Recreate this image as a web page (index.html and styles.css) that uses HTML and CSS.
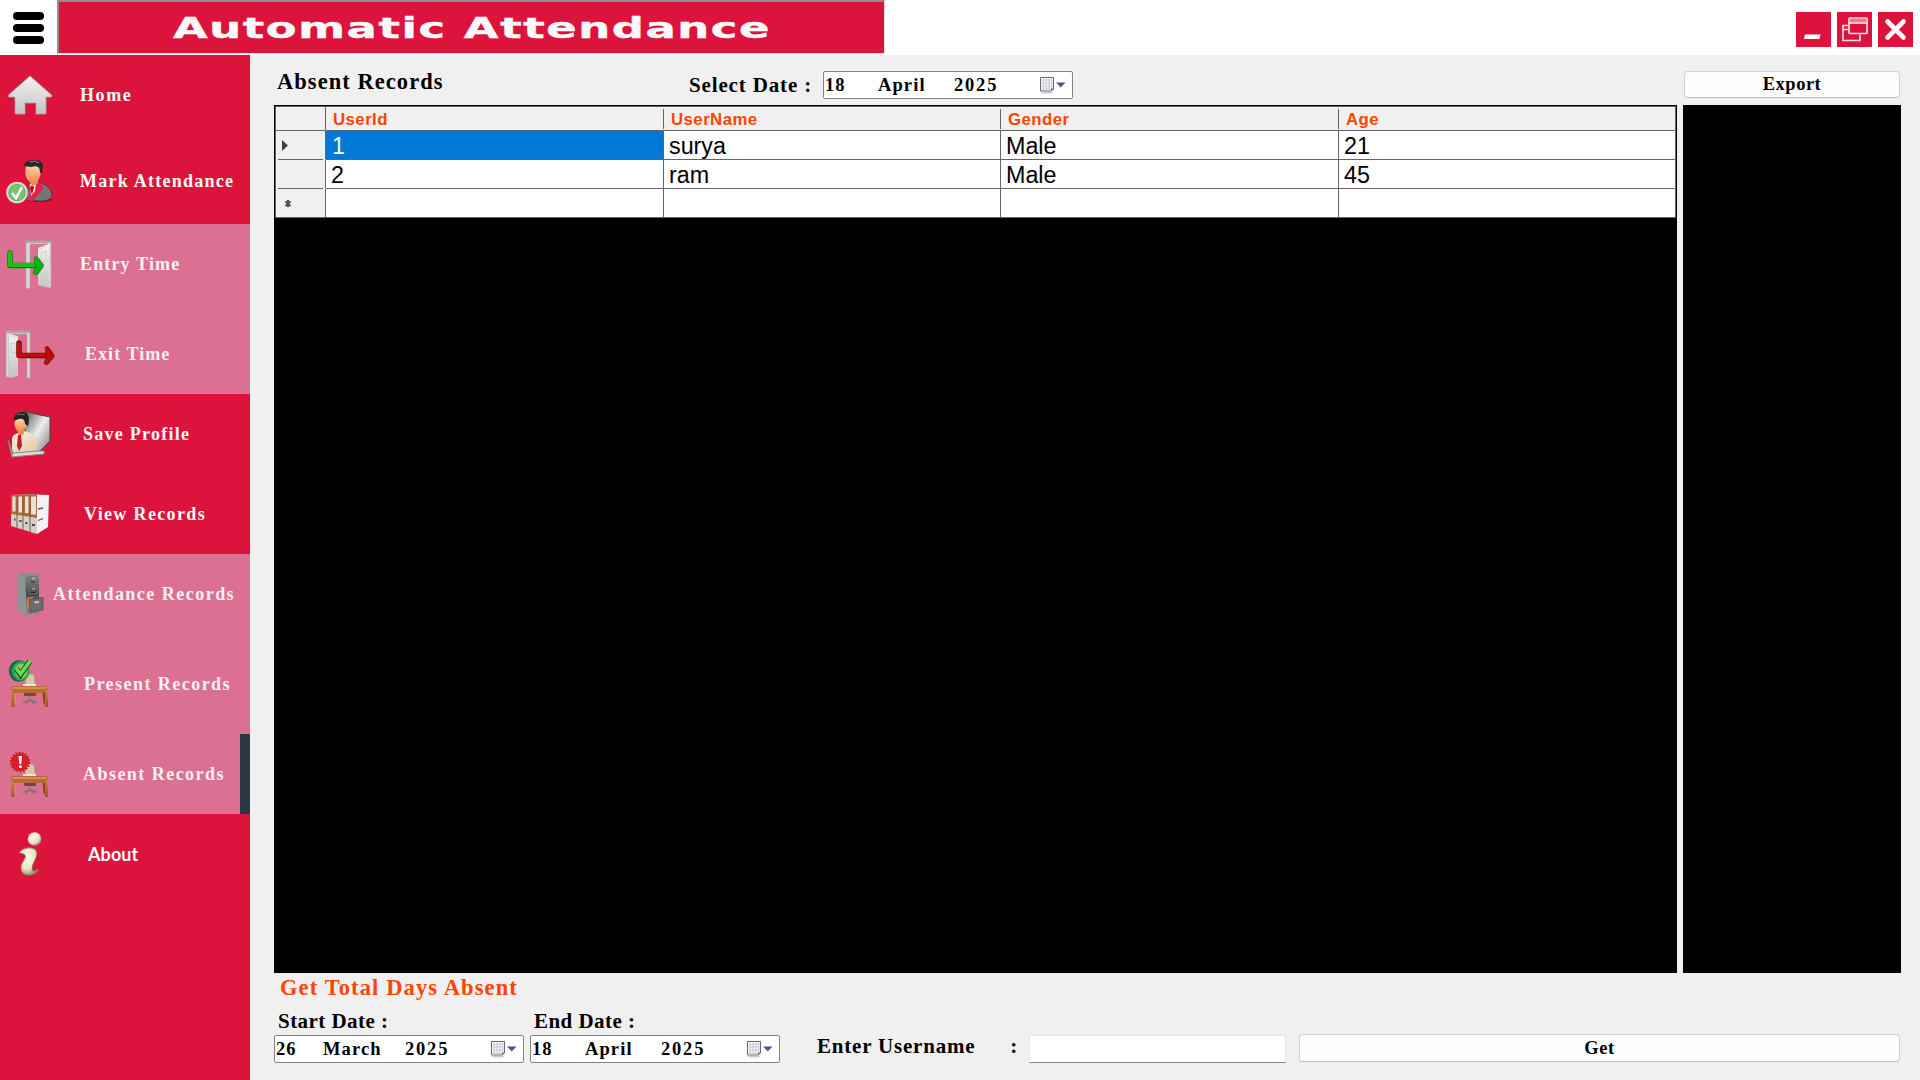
FILE: index.html
```html
<!DOCTYPE html>
<html lang="en">
<head>
<meta charset="utf-8">
<title>Automatic Attendance</title>
<link rel="stylesheet" href="styles.css">
</head>
<body>
<svg class="defs" width="0" height="0" aria-hidden="true">
  <defs>
    <linearGradient id="silver" x1="0" y1="0" x2="0" y2="1"><stop offset="0" stop-color="#f4f4f4"/><stop offset="1" stop-color="#c4c4c4"/></linearGradient>
    <linearGradient id="steel" x1="0" y1="0" x2="1" y2="1"><stop offset="0" stop-color="#555"/><stop offset=".5" stop-color="#eee"/><stop offset="1" stop-color="#777"/></linearGradient>
    <linearGradient id="skin" x1="0" y1="0" x2="0" y2="1"><stop offset="0" stop-color="#ffe6cc"/><stop offset="1" stop-color="#ee8a3e"/></linearGradient>
    <linearGradient id="shirt" x1="0" y1="0" x2="1" y2="1"><stop offset="0" stop-color="#fbf1e0"/><stop offset="1" stop-color="#e3c8a2"/></linearGradient>
    <linearGradient id="wood" x1="0" y1="0" x2="0" y2="1"><stop offset="0" stop-color="#d58a4e"/><stop offset="1" stop-color="#a55222"/></linearGradient>
    <linearGradient id="cabinet" x1="0" y1="0" x2="0" y2="1"><stop offset="0" stop-color="#8d8f90"/><stop offset=".5" stop-color="#47494a"/><stop offset="1" stop-color="#85888a"/></linearGradient>
    <radialGradient id="pearl" cx=".4" cy=".35" r=".7"><stop offset="0" stop-color="#fffbe6"/><stop offset=".6" stop-color="#ebe4c6"/><stop offset="1" stop-color="#8d8768"/></radialGradient>
    <g id="calendar">
      <path d="M2 16h12l-1 1.500H3z" fill="#aaa" opacity=".6"/>
      <path d="M1.500 1.500h13v11.500l-2 2h-11z" fill="#f6f7fa" stroke="#6f6767"/>
      <path d="M3 4h10M3 7h10M3 10h10M3 13h8M4 3v11M7 3v11M10 3v11M12.800 3v9" stroke="#c3c8d2" stroke-width=".9" fill="none"/>
      <path d="M14.500 12.500l-2.500 2.500v-2.500z" fill="#555"/>
      <path d="M17 6.500h9.500l-4.700 5z" fill="#44598c"/>
    </g>
    <g id="desk">
      <path d="M26 31q4-2 8 0l1.500 11H25z" fill="#d9c9ab" stroke="#a8946f" stroke-width=".6"/>
      <path d="M23 42h13v-2H23z" fill="#efe4ce"/>
      <path d="M24 49h12v3H24z" fill="#6f4a44"/>
      <path d="M30 52v4M22.500 58.500l7.500-3 7.500 3M25.500 60l4.500-4.500 4.500 4.500" fill="none" stroke="#777" stroke-width="1.300"/>
      <path d="M11.500 44h2.500l.5 19h-3zM45.500 44h2.500v19h-3z" fill="url(#wood)"/>
      <path d="M14 47h2.500l-1 13-1.500-1z" fill="#c98d69" opacity=".8"/><path d="M45.500 47l-3 1 1 11 1.500 2z" fill="#8f4319"/>
      <path d="M13 46h33v3H13z" fill="#b96a33"/>
      <path d="M12 42.500h35l1 3H11z" fill="#d98c4c" stroke="#a45a25" stroke-width=".6"/>
    </g>
  </defs>
</svg>

<header class="topbar">
  <button class="menu" aria-label="Menu"><span></span><span></span><span></span></button>
  <h1 class="brand">
    <svg width="826" height="51" viewBox="0 0 826 51"><text class="brand-text" x="114" y="36" textLength="598" lengthAdjust="spacingAndGlyphs">Automatic Attendance</text></svg>
  </h1>
  <div class="window-buttons">
    <svg width="35" height="35"><path d="M9 22.500h15.500l-1 4.500H8z" fill="#fff"/></svg>
    <svg width="35" height="35" fill="none" stroke="#ffe3e8" stroke-width="1.700"><path d="M11 13.500H6v15h17v-6M6 17.500h5"/><rect x="12" y="6" width="18" height="15.500" rx="1"/><path d="M12.500 8.500h17" stroke="#ee7790" stroke-width="3"/><path d="M12 11h18"/></svg>
    <svg width="35" height="35"><path d="M9.500 9.500l16 16M25.500 9.500l-16 16" stroke="#fff" stroke-width="4.600" stroke-linecap="round"/></svg>
  </div>
</header>

<div class="shell">
  <nav class="sidebar">
    <div class="group group-first">
      <a class="item home">
        <svg class="icon" viewBox="0 0 60 80"><path d="M30 21L51.500 40q1 2-1 2H46v16q0 1-1 1H36V48H25v11h-9q-1 0-1-1V42h-5q-3 0-1.500-2z" fill="url(#silver)" stroke="#aaa" stroke-width=".8"/><path d="M25 48h11v1H26v10h-1z" fill="#8d6870"/></svg>
        <span>Home</span></a>
      <a class="item mark">
        <svg class="icon" viewBox="0 0 60 80"><ellipse cx="40" cy="59" rx="12" ry="2" fill="#8d1028"/><path d="M27 59c0-12 3-16 9-18 8 1 14 5 16 12 0 6-6 7-13 7z" fill="#737679" stroke="#333" stroke-width=".6"/><path d="M29 43l9-3 6 7-11 13h-4z" fill="#e3214a"/><path d="M30 43l6-1-1 8-4 5z" fill="#f5e9ea"/><path d="M32 44l2 2-2 8-2-7z" fill="#b30d22"/><path d="M30 37h8v5l-5 3-3-3z" fill="#e98f4a"/><ellipse cx="33" cy="31" rx="7.700" ry="11" fill="url(#skin)"/><path d="M24 24.500c0-5 7-6 13-5 6 0 7 5 5 13l-2-1c0-5-2-7-6-6-4 1-7 0-10-1z" fill="#292929"/><path d="M30 21q5-2 9 1" stroke="#888" fill="none"/><circle cx="17" cy="51.500" r="9.700" fill="#459b43" stroke="#d9d9d9" stroke-width="2.200"/><circle cx="17" cy="51.500" r="8" fill="#76c46b"/><path d="M12 52l4 5 6-11" fill="none" stroke="#fff" stroke-width="2.500"/></svg>
        <span>Mark Attendance</span></a>
    </div>
    <div class="group group-sub">
      <a class="item entry">
        <svg class="icon" viewBox="0 0 60 80"><path d="M26 17h25v47l-3-1V20H30v44l-4 .5z" fill="#d8d8d8" stroke="#aaa" stroke-width=".7"/><path d="M26 17h25v2H26z" fill="#a9a9a9"/><path d="M38 24l11-4v44l-11-3z" fill="url(#silver)"/><path d="M38 24l8-3v2l-6 4z" fill="#f3dccb"/><path d="M41 29l5-2v10l-5 2zM41 50l5 1v8l-5-2z" fill="none" stroke="#c8c8c8" stroke-width=".8"/><path d="M10 29v12.500h26" fill="none" stroke="#087e08" stroke-width="5.500" stroke-linejoin="round" stroke-linecap="round"/><path d="M10 29v12h26" fill="none" stroke="#12c512" stroke-width="4" stroke-linejoin="round" stroke-linecap="round"/><path d="M34 33.500q2-2 4 0l5 6.500q1 1.500 0 3l-5 7q-3 2-5-1l2-5v-5z" fill="#0cb20e" stroke="#087e08" stroke-width=".7"/></svg>
        <span>Entry Time</span></a>
      <a class="item exit">
        <svg class="icon" viewBox="0 0 60 80"><path d="M6 17h24v47h-3V20H9v43H6z" fill="#d8d8d8" stroke="#aaa" stroke-width=".7"/><path d="M6 17h24v2H6z" fill="#a9a9a9"/><path d="M9 20l9 3v39L9 64z" fill="url(#silver)"/><path d="M10 20l8 2v3l-7-2z" fill="#f3dccb"/><path d="M11 29l5 1v9l-5-1zM11 49h5v9l-5 2z" fill="none" stroke="#c8c8c8" stroke-width=".8"/><path d="M19 29v12.500h29" fill="none" stroke="#7a0808" stroke-width="5.500" stroke-linejoin="round" stroke-linecap="round"/><path d="M19 29v12h28" fill="none" stroke="#c40d0d" stroke-width="3.700" stroke-linejoin="round" stroke-linecap="round"/><path d="M45 33.500q2-2 4 0l5 7.500v2l-6 7q-3 2-4-1l2-5v-5z" fill="#be0b0b" stroke="#7a0808" stroke-width=".7"/></svg>
        <span>Exit Time</span></a>
    </div>
    <div class="group">
      <a class="item save">
        <svg class="icon" viewBox="0 0 60 80"><path d="M25 17q13 4 25 6v24l-12 12-13-3z" fill="url(#steel)" stroke="#444" stroke-width="1"/><path d="M12 59V45q0-4 6-6l6-2q11 2 13 9v13z" fill="url(#shirt)"/><path d="M17 35h8l-2 6-4 1z" fill="#e98f4a"/><path d="M18 41h3l1 11-3 5-2-5z" fill="#bd1d2c"/><ellipse cx="20.500" cy="29.500" rx="6" ry="8.500" fill="url(#skin)"/><path d="M14 27c-1-7 5-9 9-9 6 0 7 7 5 14l-3-2c0-4-2-6-6-5-2 1-4 1-5 2z" fill="#222"/><path d="M17 21q4-2 8 0" stroke="#777" fill="none"/><path d="M8 46l5 13 26-2h5v3l-32 3z" fill="#ddd" stroke="#888" stroke-width="1"/><path d="M8 46l5 13v4z" fill="#777"/></svg>
        <span>Save Profile</span></a>
      <a class="item view">
        <svg class="icon" viewBox="0 0 60 80"><path d="M37 20.500l12 .5-1 32-11 7z" fill="#f1f2f5"/><path d="M11 21l26-1v40l-26-8z" fill="#d3d0ca"/><path d="M11 21l26-1v24l-26-4z" fill="#b3693a"/><path d="M12.500 22.500h3v15h-3zM18.500 22.500h3.500v16h-3.500zM25 22.500h3.500v16.500h-3.500zM31 22.500h5v18h-5z" fill="#e6e2dc"/><path d="M17 21v33M23 21v35M30 21v37" stroke="#77604c"/><path d="M14 45.500h1.500M19.500 47h2M25.500 49h2M32 51h3" stroke="#444" stroke-width="2.200"/><path d="M38 35l5-1M38 46.500l5-2" stroke="#555" stroke-width="1.300"/></svg>
        <span>View Records</span></a>
    </div>
    <div class="group group-sub">
      <a class="item attendance">
        <svg class="icon" viewBox="0 0 60 80"><path d="M17 20l8-1 14 1v39l-12 2z" fill="url(#cabinet)"/><path d="M17 20l8 2 2 39-10-4z" fill="#8e9395"/><path d="M29 22.500h8.500v7H29zM29 32.500h8.500v7H29z" fill="none" stroke="#6f7273" stroke-width=".7"/><path d="M32 23.500h3.500v2H32zM32 34h3.500v1.500H32z" fill="#a2a5a5"/><path d="M31 28h4M31 38.500h4" stroke="#222"/><path d="M27 44l6-1.500v12l-6 1z" fill="#c87842"/><path d="M29.500 45.500l13.500-2V56l-13 2z" fill="#686d70" stroke="#44494b" stroke-width=".7"/><path d="M34.500 47.500l4.500-.5v2l-4.500.5z" fill="#ccc"/></svg>
        <span>Attendance Records</span></a>
      <a class="item present">
        <svg class="icon" viewBox="0 0 60 80"><use href="#desk"/><ellipse cx="19" cy="27" rx="9" ry="9.500" fill="#16814d" stroke="#0f6a44" stroke-width="2.500"/><ellipse cx="21" cy="27" rx="7.500" ry="8.500" fill="#88ca72" stroke="#30ab50" stroke-width="2.500"/><path d="M16 24.500l4.500 6L30 17" fill="none" stroke="#07551e" stroke-width="5.500"/><path d="M16 24l4.500 6L30.500 16.500" fill="none" stroke="#6fdd50" stroke-width="3.600"/></svg>
        <span>Present Records</span></a>
      <a class="item absent selected">
        <svg class="icon" viewBox="0 0 60 80"><use href="#desk"/><circle cx="20" cy="28" r="8.800" fill="#d81e26"/><circle cx="20" cy="28" r="9.200" fill="none" stroke="#c81720" stroke-width="2" stroke-dasharray="1.800 1.400"/><path d="M18.500 22h3.500l-.7 8h-2zM19 31.500h2.600v2.500H19z" fill="#fff"/></svg>
        <span>Absent Records</span></a>
    </div>
    <div class="group">
      <a class="item about">
        <svg class="icon" viewBox="0 0 60 80"><circle cx="34.500" cy="25" r="6.800" fill="url(#pearl)"/><path d="M19 39c4-7 19-7 18 1-1 6-6 11-4.500 16 1 2 3 1 4.500-1q2 0 1 2c-4 6-17 6-17-2-1-6 6-11 4-14q-2-2-6-2z" fill="url(#pearl)" stroke="#777253" stroke-width=".8"/></svg>
        <span>About</span></a>
    </div>
  </nav>

  <main class="content">
    <div class="toolbar">
      <h2 class="page-title">Absent Records</h2>
      <label class="select-label">Select Date :</label>
      <div class="date april"><span class="day">18</span><span class="month">April</span><span class="year">2025</span><svg width="28" height="18"><use href="#calendar"/></svg></div>
      <button class="button export">Export</button>
    </div>

    <div class="panels">
      <div class="grid">
        <div class="row head"><div class="handle"></div><div>UserId</div><div>UserName</div><div>Gender</div><div>Age</div></div>
        <div class="row"><div class="handle"><svg width="20" height="28"><path d="M6 9l6 5.500L6 20z" fill="#404040"/></svg></div><div class="active">1</div><div>surya</div><div>Male</div><div>21</div></div>
        <div class="row"><div class="handle"></div><div>2</div><div>ram</div><div>Male</div><div>45</div></div>
        <div class="row"><div class="handle"><svg width="20" height="28"><path d="M12 11v7M9.500 12.500l5 4.500M14.500 12.500l-5 4.500" stroke="#505050" stroke-width="2"/></svg></div><div></div><div></div><div></div><div></div></div>
      </div>
      <div class="export-panel"></div>
    </div>

    <h3 class="totals-title">Get Total Days Absent</h3>
    <div class="totals">
      <div class="field">
        <label>Start Date :</label>
        <div class="date march"><span class="day">26</span><span class="month">March</span><span class="year">2025</span><svg width="28" height="18"><use href="#calendar"/></svg></div>
      </div>
      <div class="field">
        <label>End Date :</label>
        <div class="date april"><span class="day">18</span><span class="month">April</span><span class="year">2025</span><svg width="28" height="18"><use href="#calendar"/></svg></div>
      </div>
      <label class="user-label"><span>Enter Username</span><span>:</span></label>
      <input class="user-input" type="text" aria-label="Username">
      <button class="button get">Get</button>
    </div>
  </main>
</div>
</body>
</html>
```
FILE: styles.css
```css
* { box-sizing: border-box; }
body { margin: 0; width: 1920px; height: 1080px; overflow: hidden; background: #f0f0f0; color: #000; font-family: "Liberation Serif", serif; font-weight: 700; }
h1, h2, h3 { margin: 0; }
button { font: inherit; color: inherit; }
.defs { display: block; height: 0; }

.topbar { display: flex; height: 55px; background: #fff; }
.menu { width: 57px; padding: 12px 13px 0; border: 0; background: none; display: flex; flex-direction: column; gap: 4.500px; }
.menu span { width: 31px; height: 7.500px; border-radius: 4px; background: #000; }
.brand { width: 828px; height: 54px; background: #dc143c; border: solid; border-width: 2px 1px 1px 2px; border-color: #8c8c8c #e3e3e3 #e3e3e3 #8c8c8c; overflow: hidden; }
.brand svg { display: block; }
.brand-text { font: 700 28px "DejaVu Sans", sans-serif; fill: #fffafa; stroke: #fffafa; stroke-width: .4px; letter-spacing: 1px; }
.window-buttons { display: flex; gap: 6px; margin-left: auto; padding: 12px 7px 0 0; }
.window-buttons svg { background: #dc143c; }

.shell { display: flex; height: 1025px; }
.sidebar { width: 250px; background: #dc143c; color: #fffafa; font-size: 18px; }
.group { display: flex; flex-direction: column; }
.group-first { gap: 6px; padding-bottom: 3px; }
.group-sub { gap: 10px; background: #db7093; color: #f8f1f3; }
.item { display: flex; align-items: center; height: 80px; white-space: nowrap; }
.icon { width: 60px; height: 80px; flex: none; }
.home span { margin-left: 20px; letter-spacing: 1.600px; }
.mark span { margin-left: 20px; letter-spacing: 1.250px; }
.entry span { margin-left: 20px; letter-spacing: 1.150px; }
.exit span { margin-left: 25px; letter-spacing: 1.050px; }
.save span { margin-left: 23px; letter-spacing: 1.250px; }
.view span { margin-left: 24px; letter-spacing: 1.350px; }
.attendance span { margin-left: -7px; letter-spacing: 1.480px; }
.present span { margin-left: 24px; letter-spacing: 1.460px; }
.absent span { margin-left: 23px; letter-spacing: 1.460px; }
.about span { margin-left: 28px; font: 700 18px Lato, sans-serif; letter-spacing: .1px; }
.selected { border-right: 10px solid #2b3544; }

.content { width: 1670px; padding: 0 19px 0 24px; }
.toolbar { display: flex; height: 50px; }
.page-title { width: 411px; padding: 14px 0 0 3px; font-size: 22.500px; line-height: 26px; letter-spacing: 1.050px; }
.select-label { width: 138px; padding: 18px 0 0 4px; font-size: 21px; line-height: 24px; letter-spacing: .85px; white-space: pre; }
.toolbar .date { margin-top: 16px; }
.date { display: flex; align-items: center; width: 250px; height: 28px; padding: 0 5px 0 1px; background: #fff; border: 1px solid #848484; border-radius: 2px; font-size: 18.500px; letter-spacing: 1.100px; }
.date svg { margin-left: auto; }
.day { width: 53px; }
.month { width: 76px; }
.march .day { width: 47px; }
.march .month { width: 82px; }
.year { letter-spacing: 1.800px; }
.button { padding: 0; background: #fdfdfd; border: 1px solid #d0d0d0; border-bottom-color: #bcbcbc; border-radius: 4px; font-size: 18.500px; letter-spacing: .5px; }
.export { width: 216px; height: 27px; margin: 16px 1px 0 auto; }

.panels { display: flex; gap: 6px; height: 868px; }
.grid { width: 1403px; background: #000; border: 1px solid #000; font: 23.300px "Liberation Sans", sans-serif; }
.row { display: grid; grid-template-columns: 50px 338px 337px 338px 337px; grid-template-rows: 100%; width: 1401px; height: 29px; background: #fff; border-left: 1px solid #646464; }
.row > div { padding: 2px 0 0 5px; border-right: 1px solid #646464; border-bottom: 1px solid #646464; line-height: 27px; }
.row > .handle { position: relative; padding: 0; background: #f0f0f0; border-bottom-color: #f0f0f0; }
.handle::after { content: ""; position: absolute; left: 2px; right: 2px; bottom: -1px; height: 1px; background: #646464; }
.handle svg { display: block; }
.row > .active { padding-left: 6px; background: #0078d7; color: #fff; }
.row:last-child > .handle { border-bottom-color: #646464; }
.head { height: 25px; background: #f0f0f0; border-top: 1px solid #646464; color: #ff4500; font-weight: 700; font-size: 16.800px; letter-spacing: .45px; }
.head > div { padding: 0 0 0 7px; line-height: 25px; }
.head > div:not(.handle):not(:last-child) { border-right: 0; background: linear-gradient(#646464, #646464) right 2px / 1px 20px no-repeat; }
.head > .handle::after { left: 0; right: 0; }
.export-panel { width: 218px; background: #000; }

.totals-title { height: 34px; padding: 2px 0 0 6px; font-size: 22.500px; line-height: 26px; letter-spacing: 1.120px; color: #ff4500; }
.totals { display: flex; align-items: flex-start; }
.field { width: 250px; margin-right: 6px; }
.field label { display: block; height: 28px; padding-left: 4px; font-size: 21px; line-height: 28px; letter-spacing: .45px; }
.user-label { display: flex; justify-content: space-between; width: 201px; margin: 26px 11px 0 31px; font-size: 21px; line-height: 26px; letter-spacing: .8px; }
.user-input { width: 257px; height: 28px; margin-top: 28px; border: 1px solid #e6e6e6; border-bottom-color: #858585; background: #fff; }
.get { width: 601px; height: 28px; margin: 27px 1px 0 auto; }
```
